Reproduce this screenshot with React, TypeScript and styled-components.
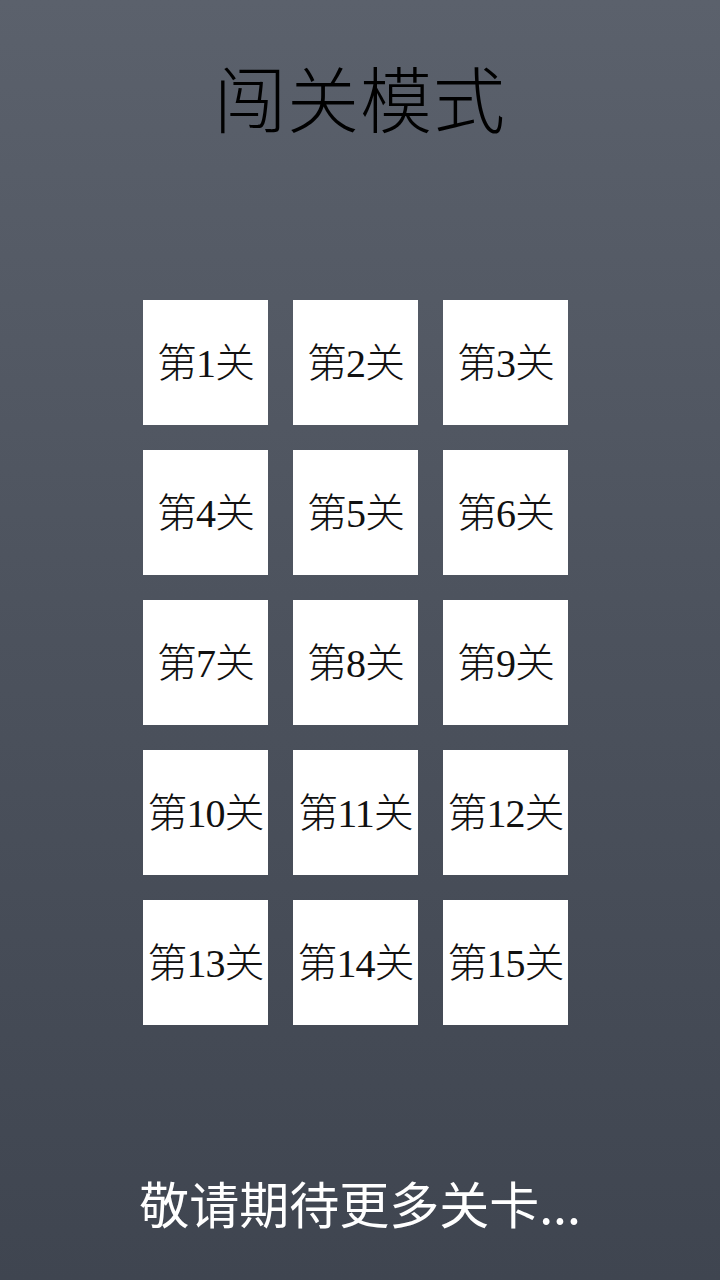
import React from "react";
import styled, { createGlobalStyle } from "styled-components";

const Global = createGlobalStyle`
  html, body { margin: 0; padding: 0; }
  body { background: #4d535e; }
`;

const Page = styled.div`
  width: 720px;
  height: 1280px;
  background: linear-gradient(to bottom, #5b616c 0%, #4c525d 50%, #3f4550 100%);
  display: flex;
  flex-direction: column;
  align-items: center;
  overflow: hidden;
`;

const Title = styled.h1`
  margin: 58px 0 0;
  font-family: "Liberation Serif", "Noto Sans CJK SC", serif;
  font-weight: 300;
  font-size: 72px;
  line-height: 90px;
  color: #000;
  letter-spacing: 1px;
`;

const Grid = styled.div`
  margin-top: 152px;
  align-self: flex-start;
  margin-left: 143px;
  display: grid;
  grid-template-columns: repeat(3, 125px);
  grid-auto-rows: 125px;
  gap: 25px;
`;

const Tile = styled.button`
  border: none;
  padding: 0 0 5px;
  background: #fff;
  display: flex;
  align-items: center;
  justify-content: center;
  font-family: "Liberation Serif", "Noto Sans CJK SC", serif;
  font-weight: 300;
  font-size: 40px;
  color: #111;
  letter-spacing: -1px;
  white-space: nowrap;
  cursor: pointer;
`;

const Footer = styled.div`
  margin-top: auto;
  margin-bottom: 48px;
  font-family: "Noto Sans CJK SC", sans-serif;
  font-size: 50px;
  line-height: 60px;
  color: #fff;
  font-weight: 400;
`;

export default function App() {
  const levels = Array.from({ length: 15 }, (_, i) => i + 1);
  return (
    <>
      <Global />
      <Page>
        <Title>闯关模式</Title>
        <Grid>
          {levels.map((n) => (
            <Tile key={n}>第{n}关</Tile>
          ))}
        </Grid>
        <Footer>敬请期待更多关卡...</Footer>
      </Page>
    </>
  );
}
